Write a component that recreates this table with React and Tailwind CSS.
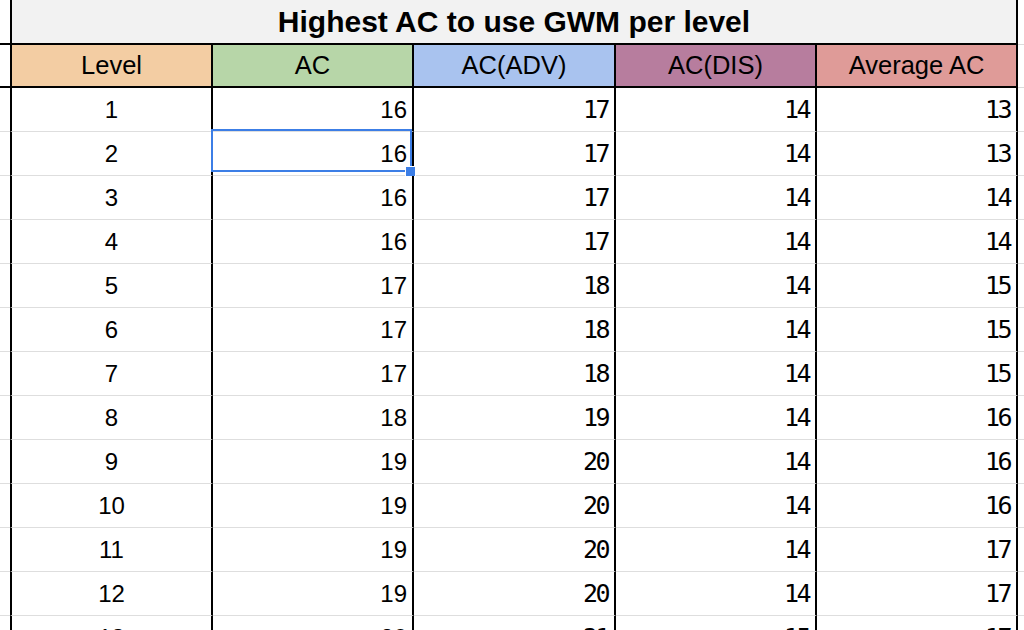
const rows = [
  [1, 16, 17, 14, 13],
  [2, 16, 17, 14, 13],
  [3, 16, 17, 14, 14],
  [4, 16, 17, 14, 14],
  [5, 17, 18, 14, 15],
  [6, 17, 18, 14, 15],
  [7, 17, 18, 14, 15],
  [8, 18, 19, 14, 16],
  [9, 19, 20, 14, 16],
  [10, 19, 20, 14, 16],
  [11, 19, 20, 14, 17],
  [12, 19, 20, 14, 17],
  [13, 20, 21, 15, 17],
];

const headers = [
  { label: "Level", bg: "bg-[#f3cda3]", w: "w-[203px] border-l-2" },
  { label: "AC", bg: "bg-[#b7d6a8]", w: "w-[201px]" },
  { label: "AC(ADV)", bg: "bg-[#a9c3ef]", w: "w-[202px]" },
  { label: "AC(DIS)", bg: "bg-[#b77d9e]", w: "w-[201px]" },
  { label: "Average AC", bg: "bg-[#df9b98]", w: "w-[201px]" },
];

const arial = "font-['Liberation_Sans',Arial,sans-serif]";
const mono = "font-['DejaVu_Sans_Mono',monospace] tracking-[-2.5px]";

const App = () => {
  return (
    <div className="w-[1024px] h-[630px] overflow-hidden bg-white text-black">
      {/* title row */}
      <div className="flex h-[45px]">
        <div className="w-[10px] border-b-2 border-black" />
        <div className={`w-[1008px] flex items-center justify-center bg-[#f2f2f2] border-l-2 border-r-2 border-b-2 border-black font-bold text-[30px] ${arial}`}>
          Highest AC to use GWM per level
        </div>
        <div className="flex-1 border-b border-[#dcdcdc]" />
      </div>

      {/* header row */}
      <div className="flex h-[43px]">
        <div className="w-[10px] border-b-2 border-black" />
        {headers.map(h => (
          <div
            key={h.label}
            className={`${h.w} ${h.bg} border-r-2 border-b-2 border-black flex items-center justify-center text-[25.5px] ${arial}`}
          >
            {h.label}
          </div>
        ))}
        <div className="flex-1 border-b border-[#dcdcdc]" />
      </div>

      {/* data rows */}
      {rows.map((r, i) => (
        <div key={r[0]} className="flex h-[44px]">
          <div className="w-[10px] border-b border-[#dedede]" />
          <div className={`w-[203px] border-l-2 border-r-2 border-black border-b-[#dedede] border-b flex items-center justify-center text-[24px] ${arial}`}>
            {r[0]}
          </div>
          <div className={`relative w-[201px] border-r-2 border-black border-b border-b-[#dedede] flex items-center justify-end pr-[5px] text-[24px] ${arial}`}>
            {r[1]}
            {i === 1 && (
              <div className="absolute -left-[2px] -top-[3px] right-[0px] bottom-[3px] border-2 border-[#3c7ee6]">
                <div className="absolute -right-[6px] -bottom-[7px] w-[11px] h-[11px] bg-[#3c7ee6] border border-white" />
              </div>
            )}
          </div>
          <div className={`w-[202px] border-r-2 border-black border-b border-b-[#dedede] flex items-center justify-end pr-[6px] text-[25px] ${mono}`}>
            {r[2]}
          </div>
          <div className={`w-[201px] border-r-2 border-black border-b border-b-[#dedede] flex items-center justify-end pr-[6px] text-[25px] ${mono}`}>
            {r[3]}
          </div>
          <div className={`w-[201px] border-r-2 border-black border-b border-b-[#dedede] flex items-center justify-end pr-[6px] text-[25px] ${mono}`}>
            {r[4]}
          </div>
          <div className="flex-1 border-b border-[#dedede]" />
        </div>
      ))}
    </div>
  );
};

export default App;
